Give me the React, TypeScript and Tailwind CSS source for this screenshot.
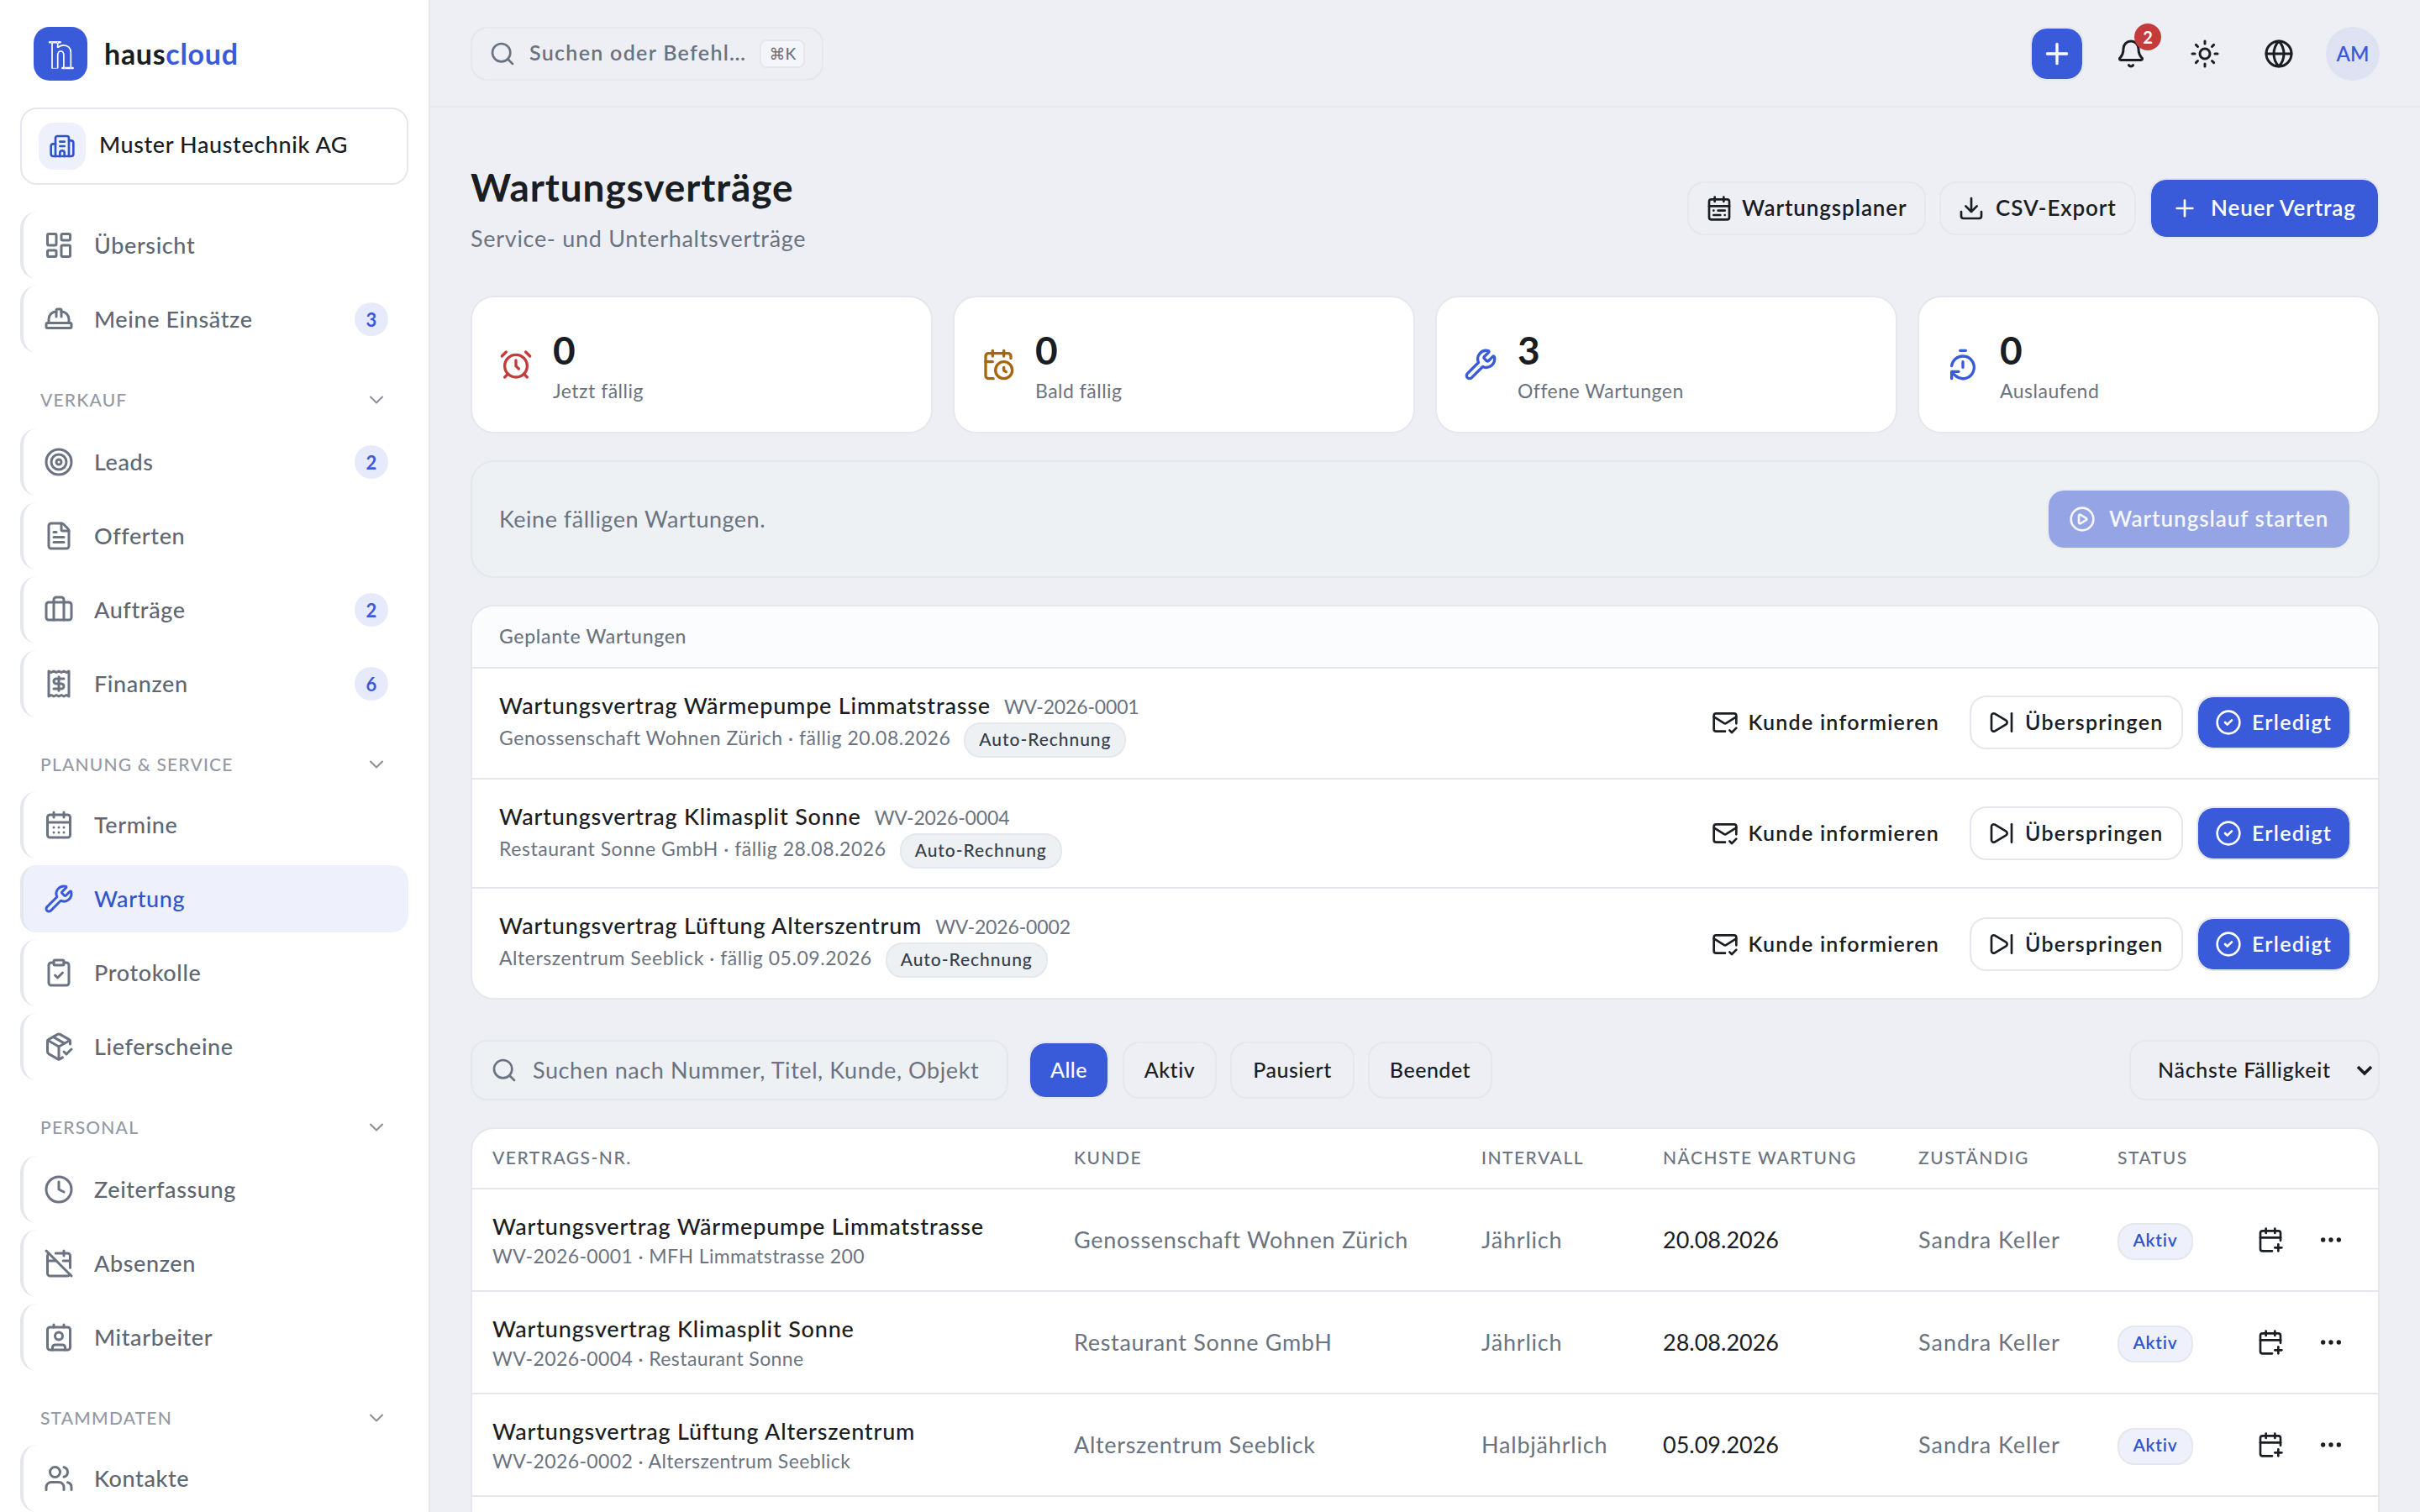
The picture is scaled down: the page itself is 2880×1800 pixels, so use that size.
import type { ReactNode } from "react";
import {
    AlarmClock,
    Bell,
    Briefcase,
    Building2,
    CalendarClock,
    CalendarDays,
    CalendarOff,
    CalendarPlus,
    CalendarRange,
    ChevronDown,
    CircleCheck,
    CirclePlay,
    ClipboardCheck,
    Clock,
    Contact,
    Download,
    Ellipsis,
    FileText,
    Globe,
    HardHat,
    LayoutDashboard,
    MailCheck,
    PackageCheck,
    Plus,
    Receipt,
    Search,
    SkipForward,
    Sun,
    Target,
    TimerReset,
    Users,
    Wrench,
    type LucideIcon,
} from "lucide-react";
import { clsx } from "clsx";

type NavEntry = { label: string; icon: LucideIcon; badge?: number; active?: boolean };
type NavGroup = { title?: string; head?: string; items: NavEntry[] };

const navGroups: NavGroup[] = [
    {
        items: [
            { label: "Übersicht", icon: LayoutDashboard },
            { label: "Meine Einsätze", icon: HardHat, badge: 3 },
        ],
    },
    {
        title: "Verkauf",
        head: "h-[90px]",
        items: [
            { label: "Leads", icon: Target, badge: 2 },
            { label: "Offerten", icon: FileText },
            { label: "Aufträge", icon: Briefcase, badge: 2 },
            { label: "Finanzen", icon: Receipt, badge: 6 },
        ],
    },
    {
        title: "Planung & Service",
        head: "h-[88px]",
        items: [
            { label: "Termine", icon: CalendarDays },
            { label: "Wartung", icon: Wrench, active: true },
            { label: "Protokolle", icon: ClipboardCheck },
            { label: "Lieferscheine", icon: PackageCheck },
        ],
    },
    {
        title: "Personal",
        head: "h-[90px]",
        items: [
            { label: "Zeiterfassung", icon: Clock },
            { label: "Absenzen", icon: CalendarOff },
            { label: "Mitarbeiter", icon: Contact },
        ],
    },
    {
        title: "Stammdaten",
        head: "h-[88px]",
        items: [{ label: "Kontakte", icon: Users }],
    },
];

const stats = [
    { value: 0, label: "Jetzt fällig", icon: AlarmClock, color: "text-[#c43b3b]" },
    { value: 0, label: "Bald fällig", icon: CalendarClock, color: "text-[#a8650f]" },
    { value: 3, label: "Offene Wartungen", icon: Wrench, color: "text-[#3a5bd9]" },
    { value: 0, label: "Auslaufend", icon: TimerReset, color: "text-[#3a5bd9]" },
];

const contracts = [
    {
        nr: "WV-2026-0001",
        title: "Wartungsvertrag Wärmepumpe Limmatstrasse",
        customer: "Genossenschaft Wohnen Zürich",
        object: "MFH Limmatstrasse 200",
        interval: "Jährlich",
        due: "20.08.2026",
    },
    {
        nr: "WV-2026-0004",
        title: "Wartungsvertrag Klimasplit Sonne",
        customer: "Restaurant Sonne GmbH",
        object: "Restaurant Sonne",
        interval: "Jährlich",
        due: "28.08.2026",
    },
    {
        nr: "WV-2026-0002",
        title: "Wartungsvertrag Lüftung Alterszentrum",
        customer: "Alterszentrum Seeblick",
        object: "Alterszentrum Seeblick",
        interval: "Halbjährlich",
        due: "05.09.2026",
    },
];

const columns = ["Vertrags-Nr.", "Kunde", "Intervall", "Nächste Wartung", "Zuständig", "Status"];
const tableGrid = "grid grid-cols-[692px_485px_216px_304px_237px_1fr] pl-6 pr-10";

const Logo = () => (
    <svg viewBox="0 0 64 64" className="size-16" fill="none">
        <rect width="64" height="64" rx="19" fill="#3a5bd9" />
        <g stroke="#fff" strokeWidth="1.7">
            <path d="M22 19v30.5M28.7 19v6" />
            <path d="M28.7 24.8c2-2.2 4.6-3 7-3 5 0 8.6 3.4 8.6 8.6V48" />
            <path d="M28.7 49.5V33.8c0-6.4 7.2-6.4 7.2 0V48" />
            <path d="M22 49.3h6.7" strokeWidth="0.7" />
            <path d="M19 18.3h12.6M34.4 49h12.2" strokeWidth="2.6" strokeLinecap="round" />
        </g>
        <g fill="#3a5bd9">
            <circle cx="22" cy="18.3" r="0.5" />
            <circle cx="28.5" cy="18.3" r="0.5" />
            <circle cx="37" cy="49" r="0.5" />
            <circle cx="44" cy="49" r="0.5" />
        </g>
    </svg>
);

const NavItem = ({ item }: { item: NavEntry }) => {
    const Icon = item.icon;
    return (
        <a
            className={clsx(
                "flex h-20 items-center rounded-[20px] border-l-4 border-[#e6e7ec] pr-6 pl-6",
                item.active ? "bg-[#eef0fc] text-[#2f55cc]" : "text-[#5f6773]",
            )}
        >
            <Icon className={clsx("size-9", item.active ? "text-[#3a5bd9]" : "text-[#6b7380]")} strokeWidth={2} />
            <span className="ml-6 flex-1 text-[27px] font-medium tracking-[0.6px]">{item.label}</span>
            {item.badge && (
                <span className="flex size-10 items-center justify-center rounded-full bg-[#e7eafa] text-[22px] font-bold text-[#3a5bd9]">
                    {item.badge}
                </span>
            )}
        </a>
    );
};

const Sidebar = () => (
    <aside className="w-[512px] shrink-0 border-r-2 border-[#e6e7ec] bg-white px-6">
        <div className="flex h-32 items-center gap-5 pl-4">
            <Logo />
            <span className="pb-0.5 text-[34px] font-bold tracking-[0.7px] text-[#1a1d21]">
                haus<span className="text-[#3a5bd9]">cloud</span>
            </span>
        </div>
        <div className="flex h-[92px] items-center gap-4 rounded-[20px] border-2 border-[#e6e7ec] px-5">
            <span className="flex size-14 items-center justify-center rounded-[18px] bg-[#eef0fc] text-[#2f55cc]">
                <Building2 className="size-8" strokeWidth={2} />
            </span>
            <span className="pb-1 text-[27px] font-medium tracking-[0.6px] text-[#1a1d21]">Muster Haustechnik AG</span>
        </div>
        <nav className="pt-8">
            {navGroups.map((group, i) => (
                <div key={i}>
                    {group.title && (
                        <div className={clsx("flex items-start justify-between pt-[38px] pr-6 pl-6", group.head)}>
                            <span className="text-[21px] leading-9 font-medium tracking-[1.2px] text-[#9499a3] uppercase">{group.title}</span>
                            <ChevronDown className="mt-1 size-7 text-[#8a909b]" strokeWidth={1.75} />
                        </div>
                    )}
                    <div className="flex flex-col gap-2">
                        {group.items.map((item) => (
                            <NavItem key={item.label} item={item} />
                        ))}
                    </div>
                </div>
            ))}
        </nav>
    </aside>
);

const IconButton = ({ children }: { children: ReactNode }) => (
    <button className="relative flex size-16 items-center justify-center text-[#1a1d21]">{children}</button>
);

const Topbar = () => (
    <header className="flex h-32 items-center justify-between border-b-2 border-[#e6e7ec] px-12 pt-0.5">
        <button className="flex h-16 w-[420px] items-center rounded-[20px] border-2 border-[#e6e7ec] pl-5 text-[#6b7380]">
            <Search className="size-8" strokeWidth={2} />
            <span className="ml-4 pb-0.5 text-[25px] font-semibold tracking-[1.3px]">Suchen oder Befehl…</span>
            <kbd className="ml-4 flex h-[34px] w-[54px] items-center justify-center rounded-lg border-2 border-[#e6e7ec] bg-[#f4f5fa] font-[Lato,'DejaVu_Sans',sans-serif] text-[19px] font-medium">
                ⌘K
            </kbd>
        </button>
        <div className="flex items-center gap-6">
            <button className="flex size-16 items-center justify-center rounded-[20px] border-2 border-[#e6e7ec] bg-[#3a5bd9] bg-clip-padding text-white">
                <Plus className="size-10" strokeWidth={2} />
            </button>
            <IconButton>
                <Bell className="size-9" strokeWidth={2} />
                <span className="absolute -top-1 right-[-4px] flex size-8 items-center justify-center rounded-full bg-[#c43b3b] text-[20px] font-bold text-white">
                    2
                </span>
            </IconButton>
            <IconButton>
                <Sun className="size-9" strokeWidth={2} />
            </IconButton>
            <IconButton>
                <Globe className="size-9" strokeWidth={2} />
            </IconButton>
            <span className="flex size-16 items-center justify-center rounded-full bg-[#dfe2f2] text-[24px] font-semibold text-[#3a5bd9]">
                AM
            </span>
        </div>
    </header>
);

const PageHead = () => (
    <div className="flex h-[108px] items-start justify-between">
        <div>
            <h1 className="text-[46px] leading-[58px] font-bold tracking-[0.9px] text-[#1a1d21]">Wartungsverträge</h1>
            <p className="pt-2.5 text-[27px] leading-[44px] tracking-[0.7px] text-[#6b7380]">Service- und Unterhaltsverträge</p>
        </div>
        <div className="flex items-center gap-4 pt-[18px] text-[26px] font-semibold tracking-[0.9px] text-[#1a1d21]">
            <button className="flex h-16 w-[284px] items-center gap-[11px] rounded-[20px] border-2 border-[#e6e7ec] pl-5">
                <CalendarRange className="size-8" strokeWidth={2} />
                <span className="pb-0.5">Wartungsplaner</span>
            </button>
            <button className="flex h-16 w-[234px] items-center gap-[13px] rounded-[20px] border-2 border-[#e6e7ec] pl-5">
                <Download className="size-8" strokeWidth={2} />
                <span className="pb-0.5">CSV-Export</span>
            </button>
            <button className="flex h-[72px] w-[274px] items-center gap-[15px] rounded-[20px] border-2 border-[#e6e7ec] bg-[#3a5bd9] bg-clip-padding pl-6 text-white">
                <Plus className="size-8" strokeWidth={2} />
                <span className="pb-0.5">Neuer Vertrag</span>
            </button>
        </div>
    </div>
);

const StatCards = () => (
    <div className="mt-[50px] grid grid-cols-4 gap-6">
        {stats.map(({ value, label, icon: Icon, color }) => (
            <div key={label} className="flex h-[164px] items-center gap-6 rounded-[28px] border-2 border-[#e6e7ec] bg-white px-8">
                <Icon className={clsx("size-10", color)} strokeWidth={2} />
                <div className="pt-0.5">
                    <div className="text-[46px] leading-[60px] font-bold text-[#1a1d21]">{value}</div>
                    <div className="text-[23px] leading-9 tracking-[0.5px] text-[#6b7380]">{label}</div>
                </div>
            </div>
        ))}
    </div>
);

const RunBanner = () => (
    <div className="mt-8 flex h-[140px] items-center justify-between rounded-[28px] border-2 border-[#e4e8eb] bg-[#edf1f4] px-8">
        <span className="text-[27px] tracking-[0.5px] text-[#6b7380]">Keine fälligen Wartungen.</span>
        <button className="flex h-[72px] w-[362px] items-center gap-4 rounded-[20px] border-2 border-[#e8ebf0] bg-[#94a4e5] bg-clip-padding pl-6 text-[26px] font-semibold tracking-[0.95px] text-[#f5f7fd]">
            <CirclePlay className="size-8" strokeWidth={2} />
            <span className="pb-0.5">Wartungslauf starten</span>
        </button>
    </div>
);

const PlannedList = () => (
    <section className="mt-8 overflow-hidden rounded-[28px] border-2 border-[#e6e7ec] bg-white">
        <h2 className="flex h-[74px] items-center border-b-2 border-[#e6e7ec] bg-[#fbfcfe] px-8 pb-0.5 text-[23px] font-medium tracking-[0.68px] text-[#6b7380]">
            Geplante Wartungen
        </h2>
        {contracts.map((c, i) => (
            <div
                key={c.nr}
                className={clsx(
                    "flex items-start justify-between px-8",
                    i === 0 ? "h-[132px]" : "h-[130px]",
                    i < contracts.length - 1 && "border-b-2 border-[#e6e7ec]",
                )}
            >
                <div className="pt-[26px] text-[#6b7380]">
                    <div className="flex items-baseline gap-4">
                        <span className="text-[27px] leading-9 font-medium tracking-[0.8px] text-[#1a1d21]">{c.title}</span>
                        <span className="text-[23px] tracking-[-0.15px]">{c.nr}</span>
                    </div>
                    <div className="mt-px flex items-start gap-4">
                        <span className="text-[23px] leading-9 tracking-[0.54px]">
                            {c.customer} · fällig {c.due}
                        </span>
                        <span className="flex h-[42px] items-center rounded-[20px] border-2 border-[#e4e7ec] bg-[#edf1f4] px-4 pb-0.5 text-[21px] font-medium tracking-[0.95px] text-[#343d4b]">
                            Auto-Rechnung
                        </span>
                    </div>
                </div>
                <div
                    className={clsx(
                        "flex gap-4 text-[25px] font-semibold tracking-[1.25px] text-[#1a1d21]",
                        i === 2 ? "pt-[34px]" : "pt-8",
                    )}
                >
                    <button className="flex h-16 items-center gap-3 px-5">
                        <MailCheck className="size-8" strokeWidth={2} />
                        Kunde informieren
                    </button>
                    <button className="flex h-16 w-[254px] items-center gap-3 rounded-[20px] border-2 border-[#e6e7ec] pl-5">
                        <SkipForward className="size-8" strokeWidth={2} />
                        Überspringen
                    </button>
                    <button className="flex h-16 w-[184px] items-center gap-3 rounded-[20px] border-2 border-[#e6e7ec] bg-[#3a5bd9] bg-clip-padding pl-5 text-white">
                        <CircleCheck className="size-8" strokeWidth={2} />
                        Erledigt
                    </button>
                </div>
            </div>
        ))}
    </section>
);

const FilterBar = () => (
    <div className="mt-12 flex items-center">
        <div className="flex h-[72px] w-[640px] items-center gap-[18px] rounded-[20px] border-2 border-[#e6e7ec] bg-[#edf1f4] pl-[22px] text-[#6b7380]">
            <Search className="size-8" strokeWidth={2} />
            <span className="text-[27px] tracking-[0.58px]">Suchen nach Nummer, Titel, Kunde, Objekt</span>
        </div>
        <div className="ml-6 flex gap-4 text-[25px] font-medium tracking-[0.5px] text-[#1a1d21]">
            <button className="h-[68px] w-24 rounded-[20px] border-2 border-[#e6e7ec] bg-[#3a5bd9] bg-clip-padding text-white">Alle</button>
            <button className="h-[68px] w-28 rounded-[20px] border-2 border-[#e6e7ec]">Aktiv</button>
            <button className="h-[68px] w-[148px] rounded-[20px] border-2 border-[#e6e7ec]">Pausiert</button>
            <button className="h-[68px] w-[148px] rounded-[20px] border-2 border-[#e6e7ec]">Beendet</button>
        </div>
        <button className="ml-auto flex h-[72px] w-[298px] items-center justify-between rounded-[20px] border-2 border-[#e6e7ec] pr-1.5 pl-8 text-[25px] font-medium tracking-[0.7px] text-[#1a1d21]">
            Nächste Fälligkeit
            <svg viewBox="0 0 20 20" className="size-5" fill="none" stroke="currentColor" strokeWidth="3.6">
                <path d="M2 6l8 8 8-8" />
            </svg>
        </button>
    </div>
);

const ContractTable = () => (
    <section className="mt-8 h-[600px] rounded-[28px] border-2 border-[#e6e7ec] bg-white">
        <div className={clsx(tableGrid, "h-[72px] items-center border-b-2 border-[#e6e7ec] pb-0.5")}>
            {columns.map((col) => (
                <span key={col} className="text-[21px] font-medium tracking-[1.5px] text-[#6b7380] uppercase">
                    {col}
                </span>
            ))}
        </div>
        {contracts.map((c) => (
            <div key={c.nr} className={clsx(tableGrid, "h-[122px] items-center border-b-2 border-[#e6e7ec] text-[27px] text-[#6b7380]")}>
                <div className="pt-0.5">
                    <div className="leading-9 font-medium tracking-[0.8px] text-[#1a1d21]">{c.title}</div>
                    <div className="text-[23px] leading-[34px] tracking-[0.4px]">
                        {c.nr} · {c.object}
                    </div>
                </div>
                <span className="tracking-[0.7px]">{c.customer}</span>
                <span className="tracking-[0.8px]">{c.interval}</span>
                <span className="text-[#1a1d21]">{c.due}</span>
                <span className="tracking-[1px]">Sandra Keller</span>
                <div className="flex items-center text-[#1a1d21]">
                    <span className="mt-1 mr-auto flex h-11 w-[90px] items-center justify-center rounded-[20px] border-2 border-[#e4e7ec] bg-[#eef0fc] pb-1 text-[21px] font-semibold tracking-[0.8px] text-[#2f55cc]">
                        Aktiv
                    </span>
                    <CalendarPlus className="mr-10 size-8" strokeWidth={2} />
                    <Ellipsis className="size-8" strokeWidth={2} />
                </div>
            </div>
        ))}
    </section>
);

export default function App() {
    return (
        <div className="flex h-[1800px] w-[2880px] overflow-hidden bg-[#eeeff4] font-[Lato,sans-serif]">
            <Sidebar />
            <div className="min-w-0 flex-1">
                <Topbar />
                <main className="px-12 pt-[66px]">
                    <PageHead />
                    <StatCards />
                    <RunBanner />
                    <PlannedList />
                    <FilterBar />
                    <ContractTable />
                </main>
            </div>
        </div>
    );
}
